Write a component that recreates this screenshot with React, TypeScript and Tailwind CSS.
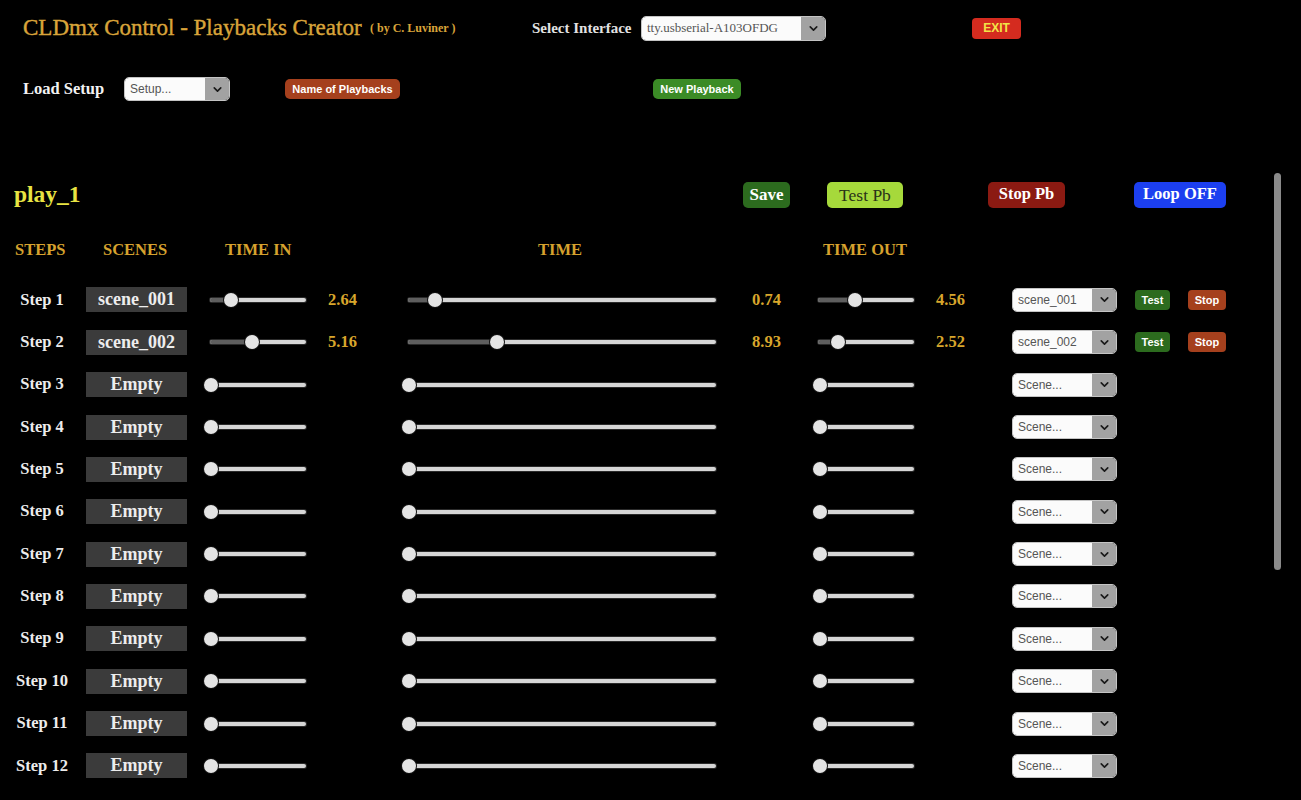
import { ChevronDown } from "lucide-react";

const serif = "font-['Liberation_Serif',serif]";
const sans = "font-['Liberation_Sans',Arial,sans-serif]";

type Step = {
  name: string;
  scene: string;
  timeIn?: number[];
  time?: number[];
  timeOut?: number[];
  pick: string;
};

// [thumb offset in px, shown value]
const steps: Step[] = [
  { name: "Step 1", scene: "scene_001", timeIn: [21, 2.64], time: [27, 0.74], timeOut: [37, 4.56], pick: "scene_001" },
  { name: "Step 2", scene: "scene_002", timeIn: [42, 5.16], time: [89, 8.93], timeOut: [20, 2.52], pick: "scene_002" },
  ...Array.from({ length: 10 }, (_, i) => ({
    name: `Step ${i + 3}`,
    scene: "Empty",
    pick: "Scene...",
  })),
];

function Select({ label, className, textClass }: { label: string; className: string; textClass: string }) {
  return (
    <div className={`flex h-[24px] overflow-hidden rounded-[5px] border border-[#c4c4c4] ${className}`}>
      <div className={`flex flex-1 items-center bg-[#fbfbfb] pl-[5px] text-[#555] ${textClass}`}>{label}</div>
      <div className="flex w-[24px] items-center justify-center bg-[#a2a2a2]">
        <ChevronDown size={13} strokeWidth={3} color="#1a1a1a" />
      </div>
    </div>
  );
}

function Slider({ className, at }: { className: string; at: number }) {
  return (
    <div className={`relative h-[14px] ${className}`}>
      <div className="absolute left-0 right-0 top-[5px] h-[4px] rounded-full bg-[#d6d6d6] ring-1 ring-[#2a2a2a]" />
      <div className="absolute left-0 top-[5px] h-[4px] rounded-full bg-[#5e5e5e]" style={{ width: at }} />
      <div
        className="absolute top-0 h-[14px] w-[14px] rounded-full bg-[#e4e4e4] ring-1 ring-[#111]"
        style={{ left: at - 7 }}
      />
    </div>
  );
}

function Value({ v, className }: { v?: number[]; className: string }) {
  return (
    <div className={`${serif} text-[16.5px] font-bold text-[#d8a62c] ${className}`}>
      {v ? v[1].toFixed(2) : ""}
    </div>
  );
}

function StepRow({ step }: { step: Step }) {
  return (
    <div className="flex h-[42.36px] items-center">
      <div className={`${serif} w-[84px] text-center text-[16.5px] font-bold text-[#ececec]`}>{step.name}</div>
      <div
        className={`${serif} ml-[2px] flex h-[25px] w-[101px] items-center justify-center bg-[#3b3b3b] text-[18px] font-bold text-[#ededed]`}
      >
        {step.scene}
      </div>
      <Slider className="ml-[23px] w-[96px]" at={step.timeIn ? step.timeIn[0] : 1} />
      <Value v={step.timeIn} className="ml-[22px] w-[80px]" />
      <Slider className="w-[308px]" at={step.time ? step.time[0] : 1} />
      <Value v={step.time} className="ml-[36px] w-[66px]" />
      <Slider className="w-[96px]" at={step.timeOut ? step.timeOut[0] : 2} />
      <Value v={step.timeOut} className="ml-[22px] w-[76px]" />
      <Select label={step.pick} className="w-[105px]" textClass={`${sans} text-[12px]`} />
      {step.timeIn && (
        <>
          <button
            className={`${sans} ml-[18px] h-[20px] w-[35px] rounded-[4px] bg-[#2c6b1e] text-[11px] font-bold text-white`}
          >
            Test
          </button>
          <button
            className={`${sans} ml-[18px] h-[20px] w-[38px] rounded-[4px] bg-[#a5401d] text-[11px] font-bold text-white`}
          >
            Stop
          </button>
        </>
      )}
    </div>
  );
}

export default function App() {
  return (
    <div className="h-[800px] w-[1301px] overflow-hidden bg-black">
      {/* top bar */}
      <div className="flex h-[56px] items-center pl-[23px]">
        <div className={`${serif} w-[347px] text-[23px] text-[#d9a43a] [-webkit-text-stroke:0.4px_#d9a43a]`}>
          CLDmx Control - Playbacks Creator
        </div>
        <div className={`${serif} w-[162px] text-[12px] font-bold text-[#d9a43a]`}>( by C. Luviner )</div>
        <div className={`${serif} w-[109px] text-[15px] font-bold text-[#e2e2e2]`}>Select Interface</div>
        <Select label="tty.usbserial-A103OFDG" className="h-[25px] w-[185px]" textClass={`${serif} text-[13px]`} />
        <div className="w-[146px]" />
        <button
          className={`${sans} h-[21px] w-[49px] rounded-[4px] bg-[#d42b1f] text-[12px] font-bold text-[#f2e447]`}
        >
          EXIT
        </button>
      </div>

      <div className="flex h-[66px] items-center pl-[23px]">
        <div className={`${serif} w-[101px] text-[16.5px] font-bold text-[#f2f2f2]`}>Load Setup</div>
        <Select label="Setup..." className="w-[106px]" textClass={`${sans} text-[12px]`} />
        <div className="w-[55px]" />
        <button
          className={`${sans} h-[20px] w-[115px] rounded-[5px] bg-[#a5401d] text-[11px] font-bold text-white`}
        >
          Name of Playbacks
        </button>
        <div className="w-[253px]" />
        <button
          className={`${sans} h-[20px] w-[88px] rounded-[5px] bg-[#3b8b26] text-[11px] font-bold text-white`}
        >
          New Playback
        </button>
      </div>

      {/* playback editor */}
      <div className="mt-[48px] flex">
        <div className="flex-1 pt-[11px]">
          <div className="flex h-[27px] items-center pl-[14px]">
            <div className={`${serif} w-[729px] text-[23.5px] font-bold text-[#e8e443]`}>play_1</div>
            <button
              className={`${serif} h-[26px] w-[47px] rounded-[5px] bg-[#2c6b1e] text-[17px] font-bold text-white`}
            >
              Save
            </button>
            <div className="w-[37px]" />
            <button
              className={`${serif} h-[26px] w-[76px] rounded-[5px] bg-[#a6d93b] text-[17.5px] text-[#2a3318]`}
            >
              Test Pb
            </button>
            <div className="w-[85px]" />
            <button
              className={`${serif} h-[26px] w-[77px] rounded-[5px] bg-[#8b1a12] text-[16.5px] font-bold text-white`}
            >
              Stop Pb
            </button>
            <div className="w-[69px]" />
            <button
              className={`${serif} h-[26px] w-[92px] rounded-[5px] bg-[#1c3ff0] text-[16.5px] font-bold text-white`}
            >
              Loop OFF
            </button>
          </div>

          <div className={`${serif} mt-[28px] flex h-[28px] items-center pl-[15px] text-[16.5px] font-bold text-[#d6a22e]`}>
            <div className="w-[88px]">STEPS</div>
            <div className="w-[122px]">SCENES</div>
            <div className="w-[313px]">TIME IN</div>
            <div className="w-[285px]">TIME</div>
            <div>TIME OUT</div>
          </div>

          <div className="mt-[14.8px]">
            {steps.map((s) => (
              <StepRow key={s.name} step={s} />
            ))}
          </div>
        </div>
        <div className="mr-[20px] mt-[3px] h-[397px] w-[7px] rounded-full bg-[#8a8a8a]" />
      </div>
    </div>
  );
}
